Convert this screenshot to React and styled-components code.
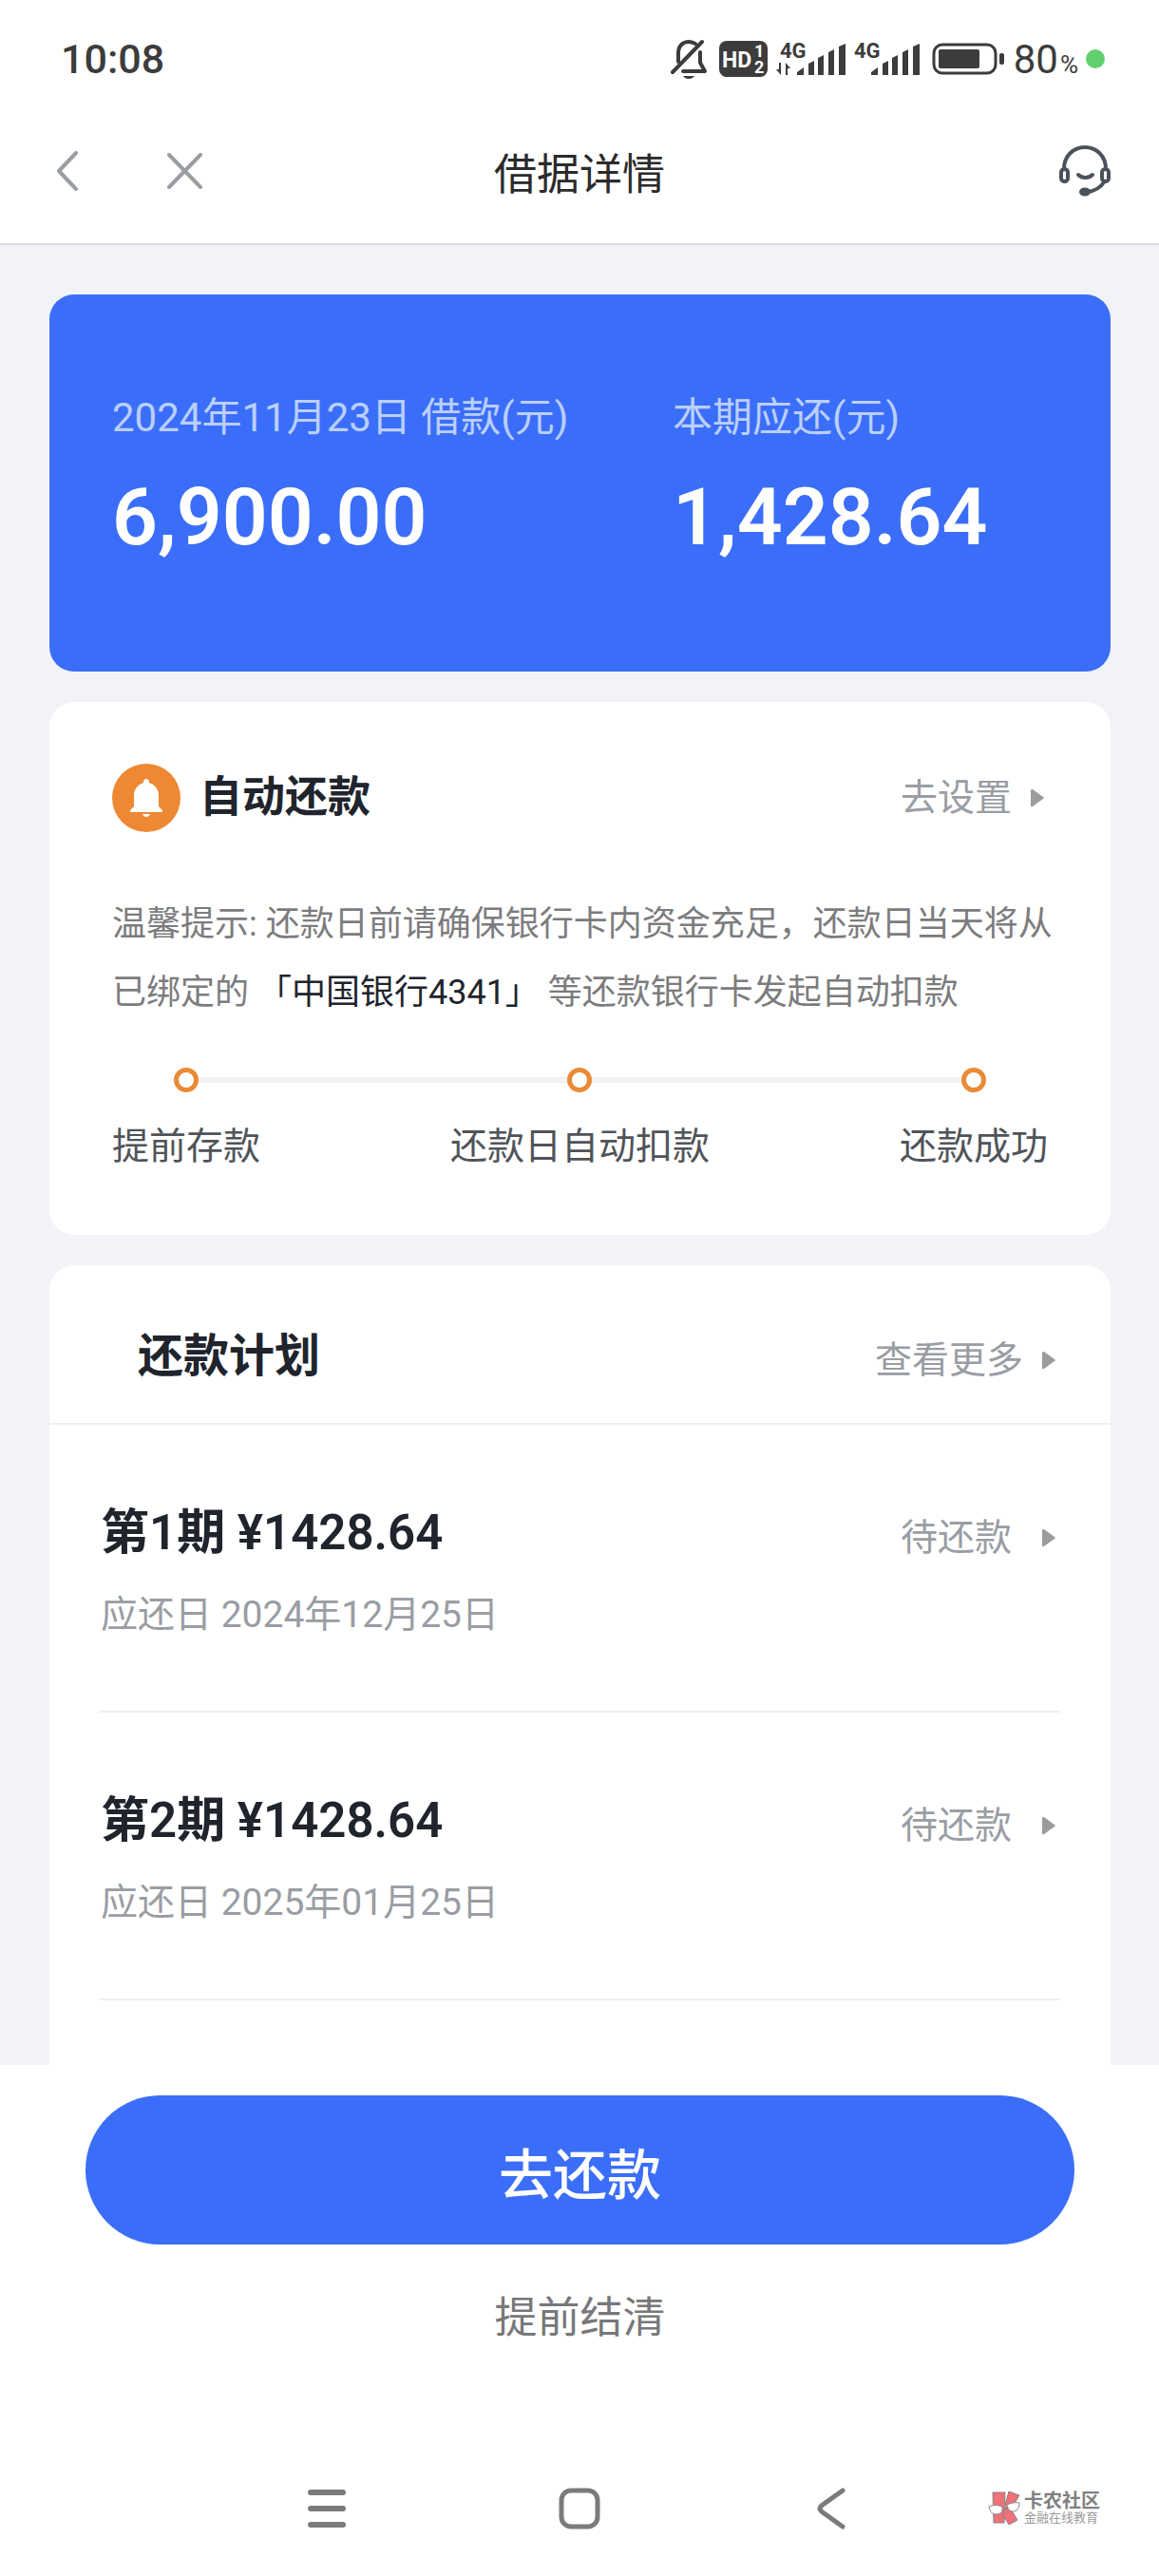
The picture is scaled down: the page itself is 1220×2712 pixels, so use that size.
import React from 'react'
import styled, { createGlobalStyle } from 'styled-components'

const periods = [
  { id: 1, title: '第1期 ¥1428.64', due: '应还日 2024年12月25日', status: '待还款' },
  { id: 2, title: '第2期 ¥1428.64', due: '应还日 2025年01月25日', status: '待还款' },
]

const steps = ['提前存款', '还款日自动扣款', '还款成功']

function Signal({ data }) {
  return (
    <svg width="74" height="48" viewBox="0 -4 74 48" fill="#3c3c3c">
      <text x={data ? 4 : 0} y="19" fontFamily="Roboto, sans-serif" fontSize="22" fontWeight="700">4G</text>
      {data && <path d="M5 24v13L0 31h3v-7zM10 37V24l5 6h-3v7z" />}
      <g transform={data ? 'translate(22 0)' : 'translate(18 0)'}>
        <path d="M0 37v-3l7-5v8zM12 37V25l6-3v15zM22 37V19l6-3v21zM33 37V13l6-3v27zM44 37V7l7-3v33z" />
      </g>
    </svg>
  )
}

function StatusBar() {
  return (
    <Status>
      <Clock>10:08</Clock>
      <StatusIcons>
        <svg width="42" height="44" viewBox="0 0 42 44" fill="none" stroke="#3c3c3c" strokeWidth="4" strokeLinecap="round" strokeLinejoin="round">
          <path d="M8 25V16C8 8 13 4 19 4c3 0 5 1 7 2M31 15v11l5 9H13" />
          <path d="M2 36L33 4" />
          <path d="M13 40h12c-2 4-10 4-12 0z" fill="#3c3c3c" stroke="none" />
        </svg>
        <svg width="53" height="40" viewBox="0 0 53 40">
          <rect x="1" y="1" width="51" height="38" rx="8" fill="#3c3c3c" />
          <g fill="#fff" fontFamily="Roboto, sans-serif" fontWeight="700">
            <text x="4" y="29" fontSize="23">HD</text>
            <text x="38" y="18" fontSize="18">1</text>
            <text x="38" y="35" fontSize="18">2</text>
          </g>
        </svg>
        <Signal data />
        <Signal />
        <svg width="78" height="34" viewBox="0 0 78 34">
          <rect x="2" y="2" width="65" height="30" rx="9" fill="none" stroke="#3c3c3c" strokeWidth="3" />
          <rect x="7" y="7" width="43" height="20" rx="2" fill="#3c3c3c" />
          <rect x="71" y="11" width="5" height="12" rx="2" fill="#3c3c3c" />
        </svg>
        <Percent>80<small>%</small></Percent>
        <GreenDot />
      </StatusIcons>
    </Status>
  )
}

function Arrow() {
  return (
    <svg width="14" height="20" viewBox="0 0 14 20" fill="#9b9c9e">
      <path d="M0 2c0-1 1-1 2-1l11 8c1 1 1 1 0 2L2 19c-1 1-2 0-2-1z" />
    </svg>
  )
}

function App() {
  return (
    <>
      <GlobalStyle />
      <Page>
        <StatusBar />
        <Header>
          <HeaderSide>
            <IconButton aria-label="返回">
              <svg width="32" height="42" viewBox="-8 0 32 42" fill="none" stroke="#9a9da4" strokeWidth="4" strokeLinecap="round" strokeLinejoin="round">
                <path d="M21 2L3 21l18 19" />
              </svg>
            </IconButton>
            <IconButton aria-label="关闭">
              <svg width="38" height="38" viewBox="0 0 38 38" fill="none" stroke="#9a9da4" strokeWidth="4" strokeLinecap="round">
                <path d="M3 2l33 34M36 2L3 36" />
              </svg>
            </IconButton>
          </HeaderSide>
          <HeaderTitle>借据详情</HeaderTitle>
          <HeaderSide $end>
            <IconButton aria-label="客服">
              <svg width="54" height="54" viewBox="0 0 54 54" fill="none" stroke="#4a525c" strokeWidth="4" strokeLinecap="round">
                <path d="M5 25C5 11 15 2 27 2s22 9 22 23" />
                <rect x="2" y="25" width="7" height="13" rx="3.5" />
                <rect x="45" y="25" width="7" height="13" rx="3.5" />
                <path d="M20 31c4 4 11 4 15 0" />
                <path d="M47 39c-4 6-10 9-17 10" />
                <ellipse cx="27" cy="49" rx="6" ry="4.5" fill="#4a525c" stroke="none" />
              </svg>
            </IconButton>
          </HeaderSide>
        </Header>

        <Main>
          <Summary>
            <SummaryItem>
              <Label>2024年11月23日 借款(元)</Label>
              <Amount>6,900.00</Amount>
            </SummaryItem>
            <SummaryItem>
              <Label>本期应还(元)</Label>
              <Amount>1,428.64</Amount>
            </SummaryItem>
          </Summary>

          <AutoCard>
            <AutoHead>
              <AutoTitle>
                <svg width="72" height="72" viewBox="0 0 72 72">
                  <circle cx="36" cy="36" r="36" fill="#ee8833" />
                  <path d="M36 16c2 0 3 1 3 4 6 2 10 7 10 13v12l4 4v2H19v-2l4-4V33c0-6 4-11 10-13 0-3 1-4 3-4z" fill="#fff" />
                  <path d="M32 53h8c-1 4-7 4-8 0z" fill="#fff" />
                </svg>
                自动还款
              </AutoTitle>
              <MoreLink href="#">去设置 <Arrow /></MoreLink>
            </AutoHead>
            <Tip>
              温馨提示: 还款日前请确保银行卡内资金充足，还款日当天将从已绑定的 <Bank>「中国银行4341」</Bank> 等还款银行卡发起自动扣款
            </Tip>
            <Steps>
              {steps.map((step) => (
                <Step key={step}>
                  <StepDot />
                  {step}
                </Step>
              ))}
            </Steps>
          </AutoCard>

          <PlanCard>
            <PlanHead>
              <PlanTitle>还款计划</PlanTitle>
              <MoreLink href="#">查看更多 <Arrow /></MoreLink>
            </PlanHead>
            <PlanList>
              {periods.map((period) => (
                <PlanRow key={period.id}>
                  <div>
                    <PeriodTitle>{period.title}</PeriodTitle>
                    <PeriodDue>{period.due}</PeriodDue>
                  </div>
                  <MoreLink href="#">{period.status} <Arrow /></MoreLink>
                </PlanRow>
              ))}
            </PlanList>
          </PlanCard>
        </Main>

        <Footer>
          <PayButton>去还款</PayButton>
          <SettleButton>提前结清</SettleButton>
        </Footer>

        <SystemNav>
          <IconButton aria-label="最近任务">
            <svg width="44" height="44" viewBox="0 0 44 44" stroke="#7b7b7b" strokeWidth="6" strokeLinecap="round">
              <path d="M5 5h34M5 22h34M5 39h34" />
            </svg>
          </IconButton>
          <IconButton aria-label="主屏幕">
            <svg width="44" height="44" viewBox="0 0 44 44" fill="none" stroke="#7b7b7b" strokeWidth="5">
              <rect x="3" y="3" width="38" height="38" rx="10" />
            </svg>
          </IconButton>
          <IconButton aria-label="后退">
            <svg width="44" height="44" viewBox="0 0 44 44" fill="none" stroke="#7b7b7b" strokeWidth="5" strokeLinecap="round">
              <path d="M33 3L12 18c-4 3-4 5 0 8l21 15" />
            </svg>
          </IconButton>
          <Brand>
            <svg width="36" height="38" viewBox="0 0 36 38" fill="none" stroke="#858585">
              <g fill="#f0717a">
                <path d="M5 2h13l-1 32H6z" />
                <path d="M22 1l11 4-9 15-7-2zM17 20l6-2 8 13-9 5-6-10z" />
              </g>
              <path d="M1 17c4-2 9-2 14 0 1 7-3 8-7 8s-6-3-7-8zM20 15c4-2 9-3 13-2 0 6-3 9-7 9-3 0-5-2-6-7zM15 18c2-2 3-3 5-3" fill="#fff" />
            </svg>
            <div>
              <BrandName>卡农社区</BrandName>
              <BrandSlogan>金融在线教育</BrandSlogan>
            </div>
          </Brand>
        </SystemNav>
      </Page>
    </>
  )
}

export default App

const GlobalStyle = createGlobalStyle`
    * {
        box-sizing: border-box;
    }
    body {
        margin: 0;
        background: #fff;
        font-family: Roboto, "Noto Sans CJK SC", sans-serif;
    }
    h1, h2, h3, p, ul {
        margin: 0;
        padding: 0;
        font-weight: 400;
    }
    svg {
        display: block;
        flex: none;
    }
`

const Page = styled.div `
    min-height: 100vh;
    display: flex;
    flex-direction: column;
`

const Status = styled.div `
    height: 104px;
    padding: 20px 57px 0 64px;
    display: flex;
    align-items: center;
    justify-content: space-between;
    color: #3c3c3c;
`

const Clock = styled.span `
    font-size: 43px;
    font-weight: 500;
`

const StatusIcons = styled.div `
    display: flex;
    align-items: center;
    gap: 8px;
`

const Percent = styled.span `
    font-size: 42px;

    small {
        font-size: 26px;
        margin-left: 2px;
    }
`

const GreenDot = styled.i `
    width: 20px;
    height: 20px;
    border-radius: 50%;
    background: #63d070;
`

const Header = styled.header `
    height: 154px;
    padding: 0 51px;
    display: flex;
    align-items: center;
    border-bottom: 2px solid #dbdde1;
`

const HeaderSide = styled.div `
    flex: 1;
    display: flex;
    align-items: center;
    gap: 92px;
    justify-content: ${(props) => (props.$end ? 'flex-end' : 'flex-start')};
`

const HeaderTitle = styled.h1 `
    font-size: 45px;
    color: #2b2b2b;
`

const IconButton = styled.button `
    border: none;
    padding: 0;
    background: none;
    cursor: pointer;
`

const Main = styled.main `
    flex: 1;
    display: flex;
    flex-direction: column;
    gap: 32px;
    padding: 52px 51px 0 52px;
    background: #f1f3f8;
`

const Summary = styled.section `
    display: grid;
    grid-template-columns: 590px 1fr;
    padding: 98px 0 107px 66px;
    border-radius: 26px;
    background: #3b6ef8;
`

const SummaryItem = styled.div `
    white-space: nowrap;
`

const Label = styled.p `
    font-size: 42px;
    line-height: 64px;
    color: #bacffd;
`

const Amount = styled.p `
    margin-top: 18px;
    font-size: 84px;
    line-height: 110px;
    font-weight: 600;
    color: #fff;
`

const AutoCard = styled.section `
    padding: 65px 56px 63px 66px;
    border-radius: 26px;
    background: #fff;
`

const AutoHead = styled.div `
    display: flex;
    align-items: center;
    justify-content: space-between;
    padding-right: 14px;
`

const AutoTitle = styled.h2 `
    display: flex;
    align-items: center;
    gap: 20px;
    font-size: 45px;
    line-height: 72px;
    font-weight: 700;
    color: #20242c;
`

const MoreLink = styled.a `
    display: flex;
    align-items: center;
    gap: 20px;
    font-size: 39px;
    line-height: 58px;
    color: #9a9da3;
    text-decoration: none;
`

const Tip = styled.p `
    margin-top: 61px;
    font-size: 36px;
    line-height: 72px;
    color: #7c7c7e;
`

const Bank = styled.span `
    color: #20242c;
`

const Steps = styled.ul `
    position: relative;
    display: flex;
    justify-content: space-between;
    margin: 43px 10px 0 0;
    list-style: none;

    &::before {
        content: '';
        position: absolute;
        left: 78px;
        right: 78px;
        top: 10px;
        height: 6px;
        background: #f2f2f3;
    }
`

const Step = styled.li `
    position: relative;
    display: flex;
    flex-direction: column;
    align-items: center;
    gap: 27px;
    font-size: 39px;
    line-height: 60px;
    color: #505459;
`

const StepDot = styled.i `
    width: 26px;
    height: 26px;
    border: 5px solid #e98a36;
    border-radius: 50%;
    background: #fff;
`

const PlanCard = styled.section `
    flex: 1;
    border-radius: 26px 26px 0 0;
    background: #fff;
`

const PlanHead = styled.div `
    height: 168px;
    display: flex;
    align-items: center;
    justify-content: space-between;
    padding: 16px 58px 0 93px;
    border-bottom: 2px solid #eeeff1;

    a {
        margin-top: 18px;
    }
`

const PlanTitle = styled.h2 `
    font-size: 48px;
    font-weight: 700;
    color: #20242c;
`

const PlanList = styled.ul `
    padding: 0 53px 0 52px;
    list-style: none;
`

const PlanRow = styled.li `
    height: 303px;
    display: flex;
    align-items: flex-start;
    justify-content: space-between;
    padding: 78px 5px 0 2px;
    border-bottom: 2px solid #eeeff1;

    a {
        margin-top: 12px;
        gap: 32px;
    }
`

const PeriodTitle = styled.h3 `
    font-size: 51px;
    line-height: 72px;
    font-weight: 600;
    color: #20242c;
`

const PeriodDue = styled.p `
    margin-top: 20px;
    font-size: 39px;
    line-height: 60px;
    color: #9a9da3;
`

const Footer = styled.footer `
    display: flex;
    flex-direction: column;
    align-items: center;
    gap: 46px;
    padding: 32px 89px 97px 90px;
`

const PayButton = styled.button `
    width: 100%;
    height: 157px;
    border: none;
    border-radius: 79px;
    background: #3b6ef8;
    color: #fff;
    font-family: inherit;
    font-size: 57px;
    font-weight: 500;
    cursor: pointer;
`

const SettleButton = styled.button `
    border: none;
    padding: 0;
    background: none;
    color: #77787a;
    font-family: inherit;
    font-size: 45px;
    line-height: 64px;
    cursor: pointer;
`

const SystemNav = styled.nav `
    position: relative;
    height: 142px;
    display: flex;
    align-items: center;
    justify-content: center;
    gap: 222px;
`

/* floats over the right end of the navigation bar */
const Brand = styled.div `
    position: absolute;
    right: 62px;
    display: flex;
    align-items: center;
    gap: 2px;
`

const BrandName = styled.p `
    font-size: 20px;
    line-height: 20px;
    font-weight: 700;
    color: #808080;
`

const BrandSlogan = styled.p `
    font-size: 13px;
    line-height: 16px;
    color: #9a9a9a;
`
